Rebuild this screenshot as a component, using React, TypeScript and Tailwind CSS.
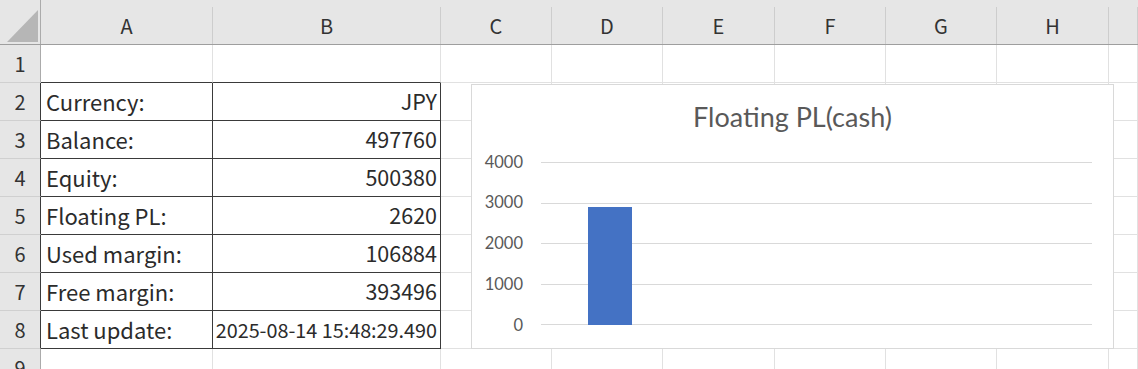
const cols = [
  { name: "A", w: "w-[172px]" },
  { name: "B", w: "w-[228px]" },
  { name: "C", w: "w-[111px]" },
  { name: "D", w: "w-[111px]" },
  { name: "E", w: "w-[112px]" },
  { name: "F", w: "w-[111px]" },
  { name: "G", w: "w-[111px]" },
  { name: "H", w: "w-[112px]" },
  { name: "", w: "w-[29px]" },
];

const rows: [string, string][] = [
  ["Currency:", "JPY"],
  ["Balance:", "497760"],
  ["Equity:", "500380"],
  ["Floating PL:", "2620"],
  ["Used margin:", "106884"],
  ["Free margin:", "393496"],
  ["Last update:", "2025-08-14 15:48:29.490"],
];

const cellFont = { fontFamily: '"Noto Sans CJK JP", "Noto Sans", sans-serif' };

const RowHeader = ({ n, edge }: { n: number; edge?: boolean }) => (
  <div
    className={`w-[41px] shrink-0 flex items-center justify-center bg-[#e6e6e6] border-b border-[#d0d0d0] text-[20px] text-[#333] ${
      edge ? "border-r border-r-[#3a3a3a]" : "border-r border-r-[#ababab]"
    }`}
  >
    {n}
  </div>
);

const EmptyCells = ({ from }: { from: number }) => (
  <>
    {cols.slice(from).map((c, i) => (
      <div key={i} className={`${c.w} shrink-0 border-r border-b border-[#e1e1e1]`} />
    ))}
  </>
);

const Chart = () => (
  <div
    className="absolute left-[471px] top-[84px] w-[643px] h-[265px] bg-white border border-[#d9d9d9] flex flex-col"
    style={{ fontFamily: 'Lato, "Open Sans", sans-serif' }}
  >
    <div className="pt-[16px] text-center text-[27px] leading-[32px] text-[#595959]">Floating PL(cash)</div>
    <div className="mt-[29px] flex">
      <div className="w-[51px] h-[163px] flex flex-col justify-between items-end text-[16.5px] text-[#595959]">
        {["4000", "3000", "2000", "1000", "0"].map((l) => (
          <div key={l} className="h-0 flex items-center">
            {l}
          </div>
        ))}
      </div>
      <div className="relative ml-[18px] w-[551px] h-[163px] flex flex-col justify-between">
        {[0, 1, 2, 3, 4].map((i) => (
          <div key={i} className="h-px bg-[#d9d9d9]" />
        ))}
        <div className="absolute left-[47px] bottom-0 w-[44px] h-[118px] bg-[#4472c4]" />
      </div>
    </div>
  </div>
);

export default function App() {
  return (
    <div className="relative w-[1138px] h-[369px] overflow-hidden bg-white text-[#2b2b2b]" style={cellFont}>
      {/* column headers */}
      <div className="flex h-[45px] bg-[#e6e6e6] border-b border-[#9e9e9e]">
        <div className="w-[41px] shrink-0 relative border-r border-[#ababab]">
          <div
            className="absolute left-[7px] top-[10px] w-[31px] h-[32px] bg-[#b6b6b6]"
            style={{ clipPath: "polygon(100% 0, 100% 100%, 0 100%)" }}
          />
        </div>
        {cols.map((c, i) => (
          <div key={i} className={`${c.w} shrink-0 flex items-end pt-[7px]`}>
            <div className="h-full w-full flex items-center justify-center border-r border-[#cdcdcd] text-[20px] text-[#333]">
              {c.name}
            </div>
          </div>
        ))}
      </div>

      {/* row 1 */}
      <div className="flex h-[38px]">
        <RowHeader n={1} />
        <div className="w-[172px] shrink-0 border-r border-[#e1e1e1] border-b border-b-[#3a3a3a]" />
        <div className="w-[228px] shrink-0 border-r border-[#e1e1e1] border-b border-b-[#3a3a3a]" />
        <EmptyCells from={2} />
      </div>

      {rows.map(([label, value], i) => (
        <div key={label} className="flex h-[38px]">
          <RowHeader n={i + 2} edge />
          <div className="w-[172px] shrink-0 flex items-center pl-[5px] border-r border-b border-[#3a3a3a] text-[22px]">
            {label}
          </div>
          <div
            className={`w-[228px] shrink-0 flex items-center justify-end pr-[3px] border-r border-b border-[#3a3a3a] whitespace-nowrap ${
              i === 6 ? "text-[19.8px]" : "text-[21.5px]"
            }`}
          >
            {value}
          </div>
          <EmptyCells from={2} />
        </div>
      ))}

      {/* row 9 */}
      <div className="flex h-[38px]">
        <RowHeader n={9} />
        <EmptyCells from={0} />
      </div>

      <Chart />
    </div>
  );
}
